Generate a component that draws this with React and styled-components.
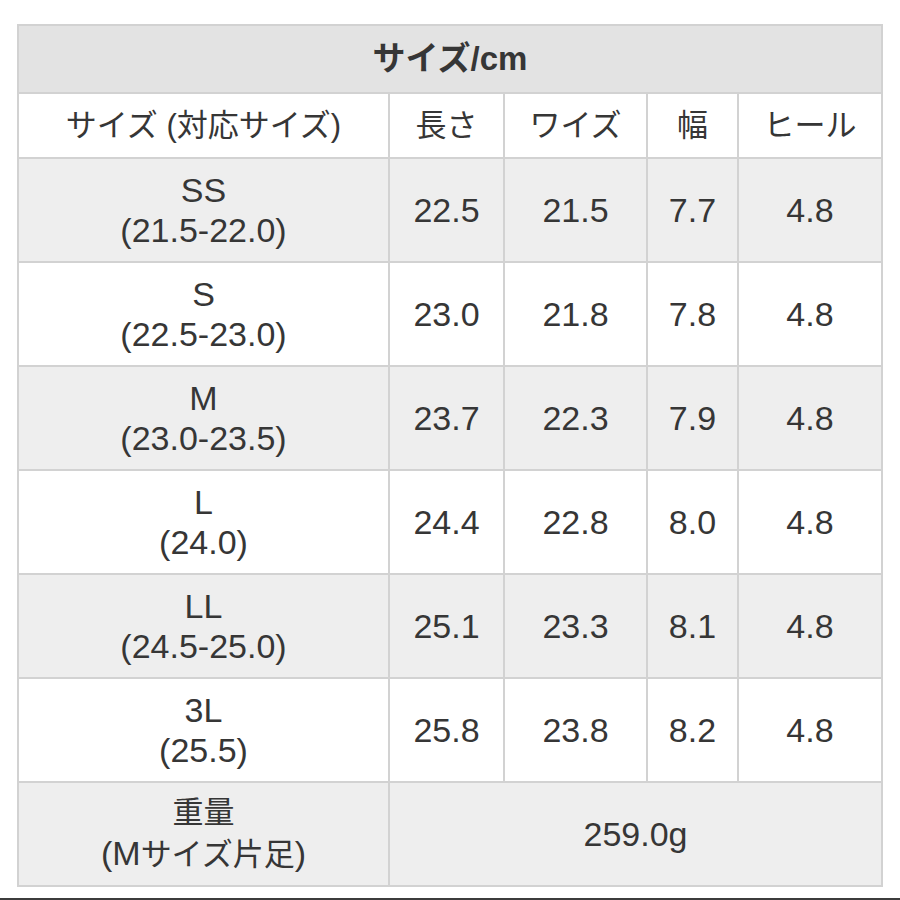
import React from "react";
import styled, { createGlobalStyle } from "styled-components";

const Global = createGlobalStyle`
  html, body { margin: 0; padding: 0; background: #ffffff; }
  body { font-family: "Liberation Sans", "Noto Sans CJK JP", sans-serif; color: #363636; }
`;

const Page = styled.div`
  width: 900px;
  height: 900px;
  display: flex;
  flex-direction: column;
  justify-content: space-between;
  box-sizing: border-box;
  padding-top: 24px;
`;

const Table = styled.div`
  margin-left: 17px;
  width: 866px;
  display: grid;
  grid-template-columns: 369px 113px 141px 89px 142px;
  grid-template-rows: 66px 63px repeat(7, 102px);
  gap: 2px;
  padding: 2px;
  box-sizing: border-box;
  background: #d2d2d2;
`;

const Cell = styled.div`
  grid-column: ${(p) => (p.$span ? `span ${p.$span}` : "auto")};
  background: ${(p) => (p.$tone === "title" ? "#e3e3e3" : p.$tone === "gray" ? "#eeeeee" : "#ffffff")};
  display: flex;
  flex-direction: column;
  align-items: center;
  justify-content: center;
  text-align: center;
  font-size: ${(p) => p.$size || 34}px;
  font-weight: ${(p) => (p.$bold ? 700 : 400)};
  line-height: 40px;
  color: #363636;
  white-space: nowrap;
`;

const Jp = styled.span`
  font-size: 31px;
`;

const BottomBar = styled.div`
  height: 2px;
  background: #3c3c3c;
`;

const headers = ["サイズ (対応サイズ)", "長さ", "ワイズ", "幅", "ヒール"];
const rows = [
  ["SS", "(21.5-22.0)", "22.5", "21.5", "7.7", "4.8"],
  ["S", "(22.5-23.0)", "23.0", "21.8", "7.8", "4.8"],
  ["M", "(23.0-23.5)", "23.7", "22.3", "7.9", "4.8"],
  ["L", "(24.0)", "24.4", "22.8", "8.0", "4.8"],
  ["LL", "(24.5-25.0)", "25.1", "23.3", "8.1", "4.8"],
  ["3L", "(25.5)", "25.8", "23.8", "8.2", "4.8"],
];

export default function App() {
  return (
    <Page>
      <Global />
      <Table>
        <Cell $span={5} $tone="title" $bold $size={33}>
          サイズ/cm
        </Cell>
        {headers.map((h) => (
          <Cell key={h} $tone="white" $size={31}>
            {h}
          </Cell>
        ))}
        {rows.map((r, i) => {
          const tone = i % 2 === 0 ? "gray" : "white";
          return (
            <React.Fragment key={r[0]}>
              <Cell $tone={tone}>
                <span>{r[0]}</span>
                <span>{r[1]}</span>
              </Cell>
              {r.slice(2).map((v, j) => (
                <Cell key={j} $tone={tone}>
                  {v}
                </Cell>
              ))}
            </React.Fragment>
          );
        })}
        <Cell $tone="gray">
          <Jp>重量</Jp>
          <span>
            (M<Jp>サイズ片足</Jp>)
          </span>
        </Cell>
        <Cell $span={4} $tone="gray">
          259.0g
        </Cell>
      </Table>
      <BottomBar />
    </Page>
  );
}
